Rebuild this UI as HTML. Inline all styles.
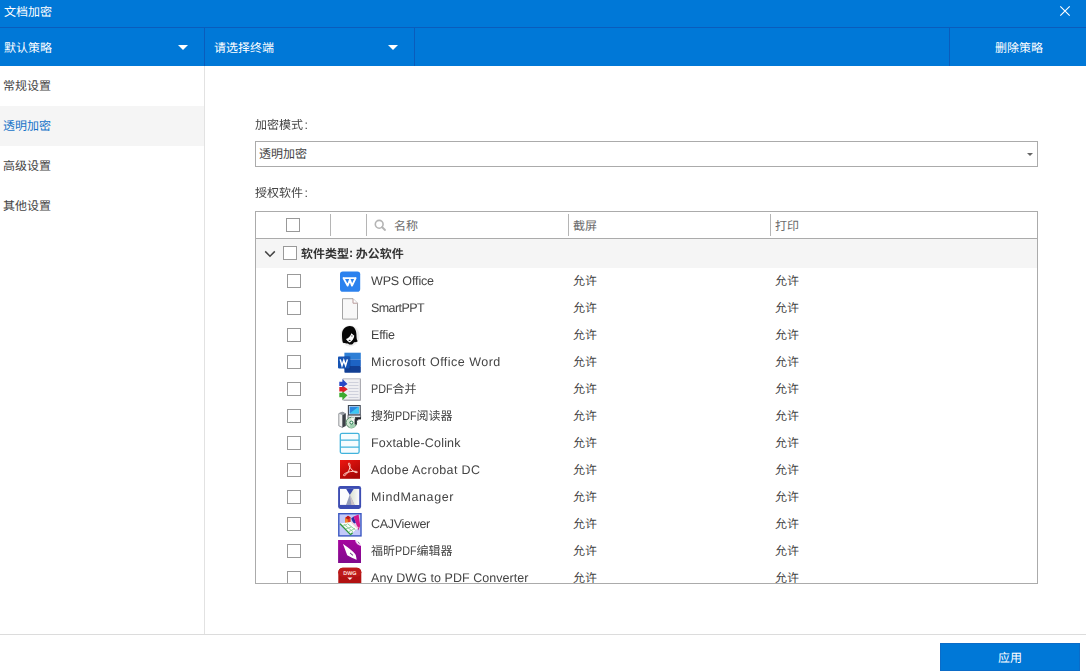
<!DOCTYPE html>
<html lang="zh-CN"><head><meta charset="utf-8"><title>文档加密</title>
<style>
*{box-sizing:border-box;margin:0;padding:0}
html,body{width:1086px;height:672px;overflow:hidden;background:#fff}
body{font-family:"Liberation Sans","Noto Sans CJK SC",sans-serif;font-size:12px;color:#444;position:relative;text-rendering:geometricPrecision}
#app{position:absolute;left:0;top:0;width:1086px;height:672px;overflow:hidden;background:#fff}
.cj{position:relative;display:inline-block;height:16px;overflow:hidden;white-space:nowrap;vertical-align:top;flex:none}
.cj i{position:absolute;left:0;top:0;font-style:normal;font-size:12px;line-height:16px;color:inherit;font-family:"Liberation Sans","Noto Sans CJK SC",sans-serif}
.hd .cj i,.gt .cj i,.btn .cj i{top:1px}
.gt .cj i{font-weight:700}
.lt{font-size:12.5px;line-height:16px;white-space:pre;flex:none}
.nm,.lbl,.gt{will-change:transform}
.lt.b{font-weight:700;letter-spacing:-0.5px}
.title{position:absolute;left:0;top:0;width:1086px;height:27px;background:#0078d7;color:#fff}
.title .cj{position:absolute;left:4px;top:4px}
.close{position:absolute;left:1059px;top:5px}
.bar{position:absolute;left:0;top:27px;width:1086px;height:39px;background:#0078d7;border-top:1px solid #0a5cbc;color:#fff}
.dd{position:absolute;top:0;height:38px;border-right:1px solid #0a5cbc}
.d1{left:0;width:205px}
.d2{left:205px;width:210px}
.dd .cj{position:absolute;top:12px}
.d1 .cj{left:4px}
.d2 .cj{left:9px}
.tri{position:absolute;top:17px;width:0;height:0;border-left:5px solid transparent;border-right:5px solid transparent;border-top:5.5px solid #fff}
.d1 .tri{left:178px}
.d2 .tri{left:183px}
.del{position:absolute;left:949px;top:0;width:137px;height:38px;border-left:1px solid #0a5cbc}
.del .cj{position:absolute;left:45px;top:12px}
.side{position:absolute;left:0;top:66px;width:205px;height:568px;border-right:1px solid #e2e2e2}
.it{height:40px;position:relative;color:#444}
.it .cj{position:absolute;left:3px;top:12px}
.it.on{background:#f5f5f5;color:#1673c8}
.main{position:absolute;left:205px;top:66px;width:881px;height:568px}
.lbl{position:absolute;left:50px;height:16px;display:flex;color:#444}
.l1{top:51px}
.l2{top:119px}
.sel{position:absolute;left:50px;top:75px;width:783px;height:26px;border:1px solid #ababab;background:#fff;color:#444}
.sel .cj{position:absolute;left:3px;top:4px}
.tri2{position:absolute;left:771px;top:11px;width:0;height:0;border-left:3.5px solid transparent;border-right:3.5px solid transparent;border-top:3.5px solid #666}
.tbl{position:absolute;left:50px;top:145px;width:783px;height:373px;border:1px solid #ababab;overflow:hidden;background:#fff}
.hd{position:relative;height:27px;border-bottom:1px solid #ababab;color:#6b6b6b}
.cb{position:absolute;width:14px;height:14px;border:1px solid #999;background:#fff}
.hd .cb{left:30px;top:6px}
.sp{position:absolute;top:2px;width:1px;height:22px;background:#b5b5b5}
.s1{left:74px}.s2{left:110px}.s3{left:312px}.s4{left:514px}
.mag{position:absolute;left:118px;top:7px}
.hd .cj{position:absolute;top:5px}
.h1 .cj{left:138px}.h2 .cj{left:317px}.h3 .cj{left:519px}
.grp{position:relative;height:29px;background:#f5f5f5;color:#333}
.chev{position:absolute;left:8px;top:11px}
.grp .cb{left:27px;top:7px}
.gt{position:absolute;left:45px;top:6px;display:flex;height:16px}
.row{position:relative;height:27px;color:#444}
.row .cb{left:31px;top:6px}
.ic{position:absolute;left:82px;top:2px}
.nm{position:absolute;left:115px;top:5px;height:16px;display:flex}
.c2{position:absolute;left:317px;top:5px}
.c3{position:absolute;left:519px;top:5px}
.foot{position:absolute;left:0;top:634px;width:1086px;height:38px;border-top:1px solid #dcdcdc;background:#fff}
.btn{position:absolute;left:940px;top:8px;width:140px;height:28px;background:#0078d7;border:1px solid #0b6cc8;color:#fff}
.btn .cj{position:absolute;left:57px;top:5px}
.lx{display:inline-block;height:16px;flex:none;overflow:visible;white-space:nowrap}
.lx .lt{display:inline-block;transform-origin:0 50%}
.co{margin-left:1.5px}

</style></head>
<body>
<div id="app">
  <div class="title"><span class="cj" style="width:48px"><i>文档加密</i></span>
    <svg class="close" width="12" height="12" viewBox="0 0 12 12"><path d="M1.3 1.3L10.7 10.7M10.7 1.3L1.3 10.7" stroke="#fff" stroke-width="1.15" fill="none"/></svg>
  </div>
  <div class="bar">
    <div class="dd d1"><span class="cj" style="width:48px"><i>默认策略</i></span><b class="tri"></b></div>
    <div class="dd d2"><span class="cj" style="width:60px"><i>请选择终端</i></span><b class="tri"></b></div>
    <div class="del"><span class="cj" style="width:48px"><i>删除策略</i></span></div>
  </div>
  <div class="side">
    <div class="it"><span class="cj" style="width:48px"><i>常规设置</i></span></div>
    <div class="it on"><span class="cj" style="width:48px"><i>透明加密</i></span></div>
    <div class="it"><span class="cj" style="width:48px"><i>高级设置</i></span></div>
    <div class="it"><span class="cj" style="width:48px"><i>其他设置</i></span></div>
  </div>
  <div class="main">
    <div class="lbl l1"><span class="cj" style="width:48px"><i>加密模式</i></span><span class="lt co">:</span></div>
    <div class="sel"><span class="cj" style="width:48px"><i>透明加密</i></span><b class="tri2"></b></div>
    <div class="lbl l2"><span class="cj" style="width:48px"><i>授权软件</i></span><span class="lt co">:</span></div>
    <div class="tbl">
      <div class="hd">
        <span class="cb"></span><i class="sp s1"></i><i class="sp s2"></i><i class="sp s3"></i><i class="sp s4"></i>
        <svg class="mag" width="14" height="14" viewBox="0 0 14 14"><circle cx="5.2" cy="5.3" r="3.9" fill="none" stroke="#b4b4b4" stroke-width="1.6"/><path d="M8.2 8.3L11 10.9" stroke="#b4b4b4" stroke-width="2" stroke-linecap="round"/></svg>
        <span class="h1"><span class="cj" style="width:24px"><i>名称</i></span></span><span class="h2"><span class="cj" style="width:24px"><i>截屏</i></span></span><span class="h3"><span class="cj" style="width:24px"><i>打印</i></span></span>
      </div>
      <div class="grp"><svg class="chev" width="12" height="8" viewBox="0 0 12 8"><path d="M1.2 1.4L6 6.2L10.8 1.4" fill="none" stroke="#444" stroke-width="1.5"/></svg><span class="cb"></span><span class="gt"><span class="cj" style="width:48px"><i>软件类型</i></span><span class="lt b">:&nbsp;</span><span class="cj" style="width:48px"><i>办公软件</i></span></span></div>
      <div class="row"><span class="cb"></span><svg class="ic" width="24" height="24" viewBox="0 0 24 24"><rect x="2" y="1.5" width="20.2" height="20.2" rx="2.8" fill="#2c82ee"/><path d="M5.5 8.1H17.6M5.5 8.1L9.6 15.6L11.9 9.8L14 15.6L17.6 8.1" fill="none" stroke="#fff" stroke-width="1.9" stroke-linejoin="round" stroke-linecap="round"/></svg><span class="nm"><span class="lt" style="letter-spacing:-0.144px">WPS Office</span></span><span class="c2"><span class="cj" style="width:24px"><i>允许</i></span></span><span class="c3"><span class="cj" style="width:24px"><i>允许</i></span></span></div><div class="row"><span class="cb"></span><svg class="ic" width="24" height="24" viewBox="0 0 24 24"><path d="M4.5 1.7H15L19.5 6.2V22.1H4.5Z" fill="#f8f8f8" stroke="#a4a4a4" stroke-width="1"/><path d="M15 1.7V6.2H19.5" fill="#fff" stroke="#b89a9a" stroke-width="1"/></svg><span class="nm"><span class="lt" style="letter-spacing:-0.564px">SmartPPT</span></span><span class="c2"><span class="cj" style="width:24px"><i>允许</i></span></span><span class="c3"><span class="cj" style="width:24px"><i>允许</i></span></span></div><div class="row"><span class="cb"></span><svg class="ic" width="24" height="24" viewBox="0 0 24 24"><ellipse cx="11.9" cy="11.8" rx="9.6" ry="10.6" fill="#000" opacity=".07"/><path d="M11.8 2C7 2 4 5.6 4 10.4C4 13.6 4.2 16 4.8 18.6C6.4 19.6 8.6 19.6 10 19.4C11 20.6 13.2 21 14.4 20.2C15.2 19.6 15.6 19 16 18.2C17.4 18.4 18.8 18 19.7 17.2C18.4 15.4 18.6 13 18.4 10C18.2 5.4 16 2 11.8 2Z" fill="#060606"/><path d="M13.4 9.2L16.3 11.8C16 14.6 14 17.4 11.8 18.4C10 17.8 8.8 16.4 8 15.1C10.4 14.2 12.6 12 13.4 9.2Z" fill="#fff"/><ellipse cx="13.9" cy="12" rx="0.9" ry="0.7" fill="#777"/><ellipse cx="11.6" cy="16.4" rx="1" ry="0.6" fill="#333"/></svg><span class="nm"><span class="lt" style="letter-spacing:-0.203px">Effie</span></span><span class="c2"><span class="cj" style="width:24px"><i>允许</i></span></span><span class="c3"><span class="cj" style="width:24px"><i>允许</i></span></span></div><div class="row"><span class="cb"></span><svg class="ic" width="24" height="24" viewBox="0 0 24 24"><rect x="6.4" y="1.7" width="16.4" height="6.8" fill="#2e7fd6"/><rect x="6.4" y="8.5" width="16.4" height="6.6" fill="#1d63c4"/><rect x="6.4" y="15.1" width="16.4" height="6.6" rx="0.8" fill="#123f94"/><rect x="6.4" y="5.4" width="6" height="13" fill="#0d3a86" opacity=".55"/><rect x="0" y="5.6" width="11.6" height="11.8" rx="0.8" fill="#1553b3"/><path d="M2.2 8.4L4 14.6L5.8 9.4L7.6 14.6L9.4 8.4" fill="none" stroke="#fff" stroke-width="1.5" stroke-linejoin="miter"/></svg><span class="nm"><span class="lt" style="letter-spacing:0.477px">Microsoft Office Word</span></span><span class="c2"><span class="cj" style="width:24px"><i>允许</i></span></span><span class="c3"><span class="cj" style="width:24px"><i>允许</i></span></span></div><div class="row"><span class="cb"></span><svg class="ic" width="24" height="24" viewBox="0 0 24 24"><rect x="5.2" y="0.8" width="17.2" height="21.4" fill="#efeff2" stroke="#bcbcc4" stroke-width="1"/><path d="M22.4 1V22.2H6" fill="none" stroke="#a9a9b0" stroke-width="1"/><path d="M10.5 4.5H20.5M10.5 7.5H20.5M10.5 10.5H20.5M10.5 13.5H20.5M10.5 16.5H20.5M10.5 19.5H20.5" stroke="#cfd1dc" stroke-width="1"/><path d="M1.3 9H4.5V7.6L9.8 11.3L4.5 15V13.6H1.3Z" fill="#dc2028"/><path d="M1.3 3.8H4.4V0.9L9.5 6L4.4 9.6V8H1.3Z" fill="#2648c8"/><path d="M1.3 14.8H4.4V13.4L9.5 17.3L4.4 22.2V19.2H1.3Z" fill="#3cab2e"/></svg><span class="nm"><span class="lx" style="width:21.60px"><span class="lt" style="transform:scaleX(0.8640)">PDF</span></span><span class="cj" style="width:24px"><i>合并</i></span></span><span class="c2"><span class="cj" style="width:24px"><i>允许</i></span></span><span class="c3"><span class="cj" style="width:24px"><i>允许</i></span></span></div><div class="row"><span class="cb"></span><svg class="ic" width="24" height="24" viewBox="0 0 24 24"><rect x="10.4" y="0.5" width="11.8" height="9.4" fill="#eef2f8" stroke="#3c4654" stroke-width="1.1"/><rect x="11.6" y="1.6" width="9.2" height="7" fill="#2a86e0"/><path d="M11.6 8.6L20.8 1.6V8.6Z" fill="#3cc8f2"/><path d="M10 10.2H22.6V13.6H10Z" fill="#e4e7ec" stroke="#4a4f57" stroke-width=".8"/><path d="M17 12.2H23V14.4H17Z" fill="#23262c"/><path d="M0.8 8.6L4.6 7V22.6L0.8 20.8Z" fill="#f1f1f1" stroke="#7a7e84" stroke-width=".8"/><path d="M4.6 7L7.8 8.6V21L4.6 22.6Z" fill="#3c4047"/><path d="M0.8 8.6L4.6 7L7.8 8.6L4.6 10.2Z" fill="#9a9ea6"/><circle cx="13.4" cy="17.6" r="5.3" fill="#cfe6d2" stroke="#5a8a68" stroke-width="1"/><path d="M13.4 12.3A5.3 5.3 0 0 1 18.5 16.2L13.4 17.6Z" fill="#f0f6ee"/><path d="M13.4 17.6L17.6 21A5.3 5.3 0 0 1 11.2 22.4Z" fill="#9ed0b0"/><circle cx="13.4" cy="17.6" r="1.5" fill="#fff" stroke="#1f7a4a" stroke-width="1"/><path d="M16.6 14H20.2V15.6H18.8V19.6H16.6Z" fill="#2b2e35"/></svg><span class="nm"><span class="cj" style="width:24px"><i>搜狗</i></span><span class="lx" style="width:21.60px"><span class="lt" style="transform:scaleX(0.8640)">PDF</span></span><span class="cj" style="width:36px"><i>阅读器</i></span></span><span class="c2"><span class="cj" style="width:24px"><i>允许</i></span></span><span class="c3"><span class="cj" style="width:24px"><i>允许</i></span></span></div><div class="row"><span class="cb"></span><svg class="ic" width="24" height="24" viewBox="0 0 24 24"><rect x="2.3" y="1.4" width="18.8" height="19.9" rx="1.6" fill="#f6fcfe" stroke="#41b3dc" stroke-width="1.3"/><path d="M2.3 8.1H21.1M2.3 15.2H21.1" stroke="#41b3dc" stroke-width="1.3"/></svg><span class="nm"><span class="lt" style="letter-spacing:0.190px">Foxtable-Colink</span></span><span class="c2"><span class="cj" style="width:24px"><i>允许</i></span></span><span class="c3"><span class="cj" style="width:24px"><i>允许</i></span></span></div><div class="row"><span class="cb"></span><svg class="ic" width="24" height="24" viewBox="0 0 24 24"><defs><linearGradient id="ag" x1="0" y1="0" x2="0.6" y2="1"><stop offset="0" stop-color="#ee1710"/><stop offset="1" stop-color="#a80606"/></linearGradient></defs><rect x="2" y="1" width="20" height="18.8" fill="url(#ag)"/><path d="M10.6 4.2C11.8 3.4 12.4 5.6 11.8 8.6C11.2 11.8 8.6 15.8 6.6 16.6C5.2 17.2 5 15.6 7 14.4C9.8 12.8 15.4 11.8 18.4 12.4C20 12.8 19.6 14 18 13.6C15.4 13 12.2 9.4 11 6.6C10.6 5.6 10.2 4.6 10.6 4.2Z" fill="none" stroke="#ffd2c8" stroke-width="1" stroke-linejoin="round"/></svg><span class="nm"><span class="lt" style="letter-spacing:0.365px">Adobe Acrobat DC</span></span><span class="c2"><span class="cj" style="width:24px"><i>允许</i></span></span><span class="c3"><span class="cj" style="width:24px"><i>允许</i></span></span></div><div class="row"><span class="cb"></span><svg class="ic" width="24" height="24" viewBox="0 0 24 24"><defs><linearGradient id="mg" x1="0" y1="0" x2="1" y2="0"><stop offset="0" stop-color="#d9e0cf"/><stop offset="1" stop-color="#fbfbfd"/></linearGradient></defs><rect x="0.1" y="0" width="23" height="22.9" rx="2.3" fill="#3d4db2"/><rect x="2" y="2.9" width="19.1" height="16" fill="#fcfcfe"/><path d="M15.5 2.9L11.8 8.6L16.3 18.9H21.1V2.9Z" fill="url(#mg)"/><path d="M8.2 2.9H15.7L11.8 9Z" fill="#3848ae"/><path d="M11.8 8.4L8 18.9H16.6Z" fill="#949cba"/><path d="M11.8 8.4L16.6 18.9H13.4Z" fill="#cdc2c8"/></svg><span class="nm"><span class="lt" style="letter-spacing:0.597px">MindManager</span></span><span class="c2"><span class="cj" style="width:24px"><i>允许</i></span></span><span class="c3"><span class="cj" style="width:24px"><i>允许</i></span></span></div><div class="row"><span class="cb"></span><svg class="ic" width="24" height="24" viewBox="0 0 24 24"><rect x="0.8" y="0.7" width="22.2" height="22.2" fill="#c3c9f9" stroke="#3b58c2" stroke-width="1.4"/><path d="M7.2 5L10 2.8L12.6 4.4V10L9.8 12.2L7.2 10.6Z" fill="#e43c24"/><path d="M7.2 5L10 2.8L12.6 4.4L9.8 6.4Z" fill="#c01616"/><path d="M9.8 6.4V12.2L7.2 10.6V5Z" fill="#f08a2a"/><path d="M13.2 5.4L15.6 3.6L18 9.6L15.6 11Z" fill="#2c2ca4"/><path d="M15.6 3.6L20.6 1.6L22.2 12.8L20.2 17.6L17.8 9.6Z" fill="#d4168c"/><path d="M2.2 10.5L14.2 8.8L20.5 14.7L12.6 21.3Z" fill="#fafcfa"/><path d="M14.2 8.8L20.5 14.7L19.5 15.9L13 9.4Z" fill="#f2c6da"/><path d="M6 11.4L15 18.8M9.4 10.6L17.6 17M4.6 12.4L9 11.6M8 15.8L13.4 14M11 18.6L17 15.4" stroke="#7cc68a" stroke-width=".8" fill="none"/><path d="M2 10.7L12.6 21.6L14.6 19.8" fill="none" stroke="#2f9a3c" stroke-width="1.3"/></svg><span class="nm"><span class="lt" style="letter-spacing:-0.290px">CAJViewer</span></span><span class="c2"><span class="cj" style="width:24px"><i>允许</i></span></span><span class="c3"><span class="cj" style="width:24px"><i>允许</i></span></span></div><div class="row"><span class="cb"></span><svg class="ic" width="24" height="24" viewBox="0 0 24 24"><defs><linearGradient id="fg" x1="0" y1="0" x2="0" y2="1"><stop offset="0" stop-color="#a6059f"/><stop offset="1" stop-color="#800a8c"/></linearGradient></defs><path d="M0.1 0H17.6Q18 4.6 23 5.4V23H0.1Z" fill="url(#fg)"/><path d="M17.6 0Q18 4.6 23 5.4" fill="none" stroke="#f1b4f2" stroke-width="1"/><path d="M19.4 1L22.4 4.2Q20 3.8 19.4 1Z" fill="#5c1268"/><path d="M4.9 4C8 5.8 15.4 11.2 17.6 14.7C18.2 16.4 18.5 18.4 18.7 19.8C17 19 14.6 18 13 17.2L9.2 15.3C8 11.8 6.2 7.2 4.9 4Z" fill="#fff"/><path d="M12.2 12.4L15.2 15L14.6 15.8L11.8 13.2Z" fill="#6a3a86"/></svg><span class="nm"><span class="cj" style="width:24px"><i>福昕</i></span><span class="lx" style="width:21.60px"><span class="lt" style="transform:scaleX(0.8640)">PDF</span></span><span class="cj" style="width:36px"><i>编辑器</i></span></span><span class="c2"><span class="cj" style="width:24px"><i>允许</i></span></span><span class="c3"><span class="cj" style="width:24px"><i>允许</i></span></span></div><div class="row"><span class="cb"></span><svg class="ic" width="24" height="24" viewBox="0 0 24 24"><rect x="0.3" y="0.7" width="23" height="23" rx="4.6" fill="#b21212"/><rect x="0.3" y="0.7" width="23" height="9" rx="4.6" fill="#bd1a1a"/><text x="11.9" y="7.9" text-anchor="middle" font-family="'Liberation Sans',sans-serif" font-weight="700" font-size="5.4" fill="#ffe0da">DWG</text><path d="M9.3 10.4H14.5L11.9 13Z" fill="#ffeeea"/><text x="12" y="19.6" text-anchor="middle" font-family="'Liberation Sans',sans-serif" font-weight="700" font-size="5.4" fill="#ffe0da">PDF</text></svg><span class="nm"><span class="lt" style="letter-spacing:0.053px">Any DWG to PDF Converter</span></span><span class="c2"><span class="cj" style="width:24px"><i>允许</i></span></span><span class="c3"><span class="cj" style="width:24px"><i>允许</i></span></span></div>
    </div>
  </div>
  <div class="foot"><div class="btn"><span class="cj" style="width:24px"><i>应用</i></span></div></div>
</div>
</body></html>
